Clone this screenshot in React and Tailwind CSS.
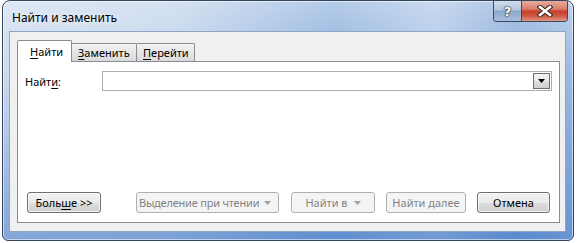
export default function App() {
  const btn =
    "h-[21px] rounded-[3px] border border-[#707070] bg-[linear-gradient(to_bottom,#f2f2f2_0%,#ebebeb_50%,#dddddd_51%,#cfcfcf_100%)] shadow-[inset_0_0_0_1px_rgba(255,255,255,0.7)] text-[11px] text-black flex items-center justify-center whitespace-nowrap";
  const dis =
    "h-[21px] rounded-[3px] border border-[#adb2b5] bg-[#f4f4f4] text-[11px] text-[#838383] flex items-center whitespace-nowrap";
  return (
    <div className="w-[579px] h-[243px] bg-white overflow-hidden font-['Noto_Sans',sans-serif] leading-none">
      <div className="ml-[2px] w-[572px] h-[241px] rounded-t-[8px] rounded-b-[6px] border border-[#34465e] flex flex-col bg-[linear-gradient(to_bottom,rgba(255,255,255,0.35),rgba(255,255,255,0)_30%,rgba(40,100,190,0.45)),linear-gradient(to_right,#cddbee_0%,#bfd2ea_30%,#8cafdc_58%,#adc6e7_76%,#84a8d9_90%,#9dbbe3_100%)] shadow-[inset_0_0_0_1px_rgba(255,255,255,0.55)]">
        {/* title bar */}
        <div className="h-[30px] flex items-start pl-[9px] pr-[5px]">
          <div className="pt-[11px] text-[12px] text-black [text-shadow:0_0_6px_rgba(255,255,255,0.9)] whitespace-nowrap">
            Найти и заменить
          </div>
          <div className="ml-auto flex h-[21px] rounded-b-[4px] border border-t-0 border-[#3a4a62] overflow-hidden">
            <div className="w-[28px] h-full flex items-center justify-center bg-[linear-gradient(to_bottom,#d3deed_0%,#b3c5de_45%,#8ea8cb_50%,#a9bfdc_100%)] border-r border-[#3a4a62]">
              <span className="text-[13px] font-bold text-white [text-shadow:0_0_1px_#1d2a3a,0_0_1px_#1d2a3a,0_0_2px_#1d2a3a] font-['DejaVu_Sans',sans-serif]">?</span>
            </div>
            <div className="w-[45px] h-full flex items-center justify-center bg-[linear-gradient(to_bottom,#e9aa9d_0%,#d8806e_40%,#c6412b_52%,#cf5a45_75%,#e39683_100%)]">
              <svg width="16" height="12" viewBox="0 0 16 12">
                <path d="M3 2 L13 10 M13 2 L3 10" stroke="#3a2420" strokeWidth="4.6" strokeLinecap="square" />
                <path d="M3 2 L13 10 M13 2 L3 10" stroke="#ffffff" strokeWidth="2.6" strokeLinecap="square" />
              </svg>
            </div>
          </div>
        </div>
        {/* client area */}
        <div className="ml-[6px] mr-[7px] mb-[8px] flex-1 bg-[#f0f0f0] border border-[#8ea5c4] flex flex-col pl-[7px] pr-[5px] pt-[8px] pb-[8px]">
          {/* tabs */}
          <div className="flex items-end h-[21px] text-[11px] text-black relative z-10 whitespace-nowrap">
            <div className="w-[55px] h-[22px] border border-b-0 border-[#898c95] bg-white rounded-t-[2px] flex items-center pl-[12px] pb-[1px] -mb-[1px]">
              <span><span className="underline underline-offset-2">Н</span>айти</span>
            </div>
            <div className="w-[65px] h-[18px] border border-b-0 border-l-0 border-[#898c95] bg-[linear-gradient(to_bottom,#f3f3f3,#e5e5e5_50%,#dadada)] rounded-tr-[2px] flex items-center pl-[6px]">
              <span><span className="underline underline-offset-2">З</span>аменить</span>
            </div>
            <div className="w-[58px] h-[18px] border border-b-0 border-l-0 border-[#898c95] bg-[linear-gradient(to_bottom,#f3f3f3,#e5e5e5_50%,#dadada)] rounded-tr-[2px] flex items-center pl-[6px]">
              <span><span className="underline underline-offset-2">П</span>ерейти</span>
            </div>
          </div>
          {/* panel */}
          <div className="flex-1 bg-white border border-[#898c95] flex flex-col pt-[9px] pb-[9px]">
            <div className="flex items-center h-[20px] pl-[7px] pr-[7px]">
              <div className="w-[77px] text-[11px] text-black whitespace-nowrap">
                Найт<span className="underline underline-offset-2">и</span>:
              </div>
              <div className="flex-1 h-[20px] border border-[#abadb3] flex justify-end items-center pr-[1px]">
                <div className="w-[17px] h-[16px] border border-[#707070] bg-[linear-gradient(to_bottom,#f2f2f2,#ebebeb_50%,#dddddd_51%,#cfcfcf)] flex items-center justify-center">
                  <svg width="7" height="4" viewBox="0 0 7 4"><path d="M0 0 H7 L3.5 4 Z" fill="#000" /></svg>
                </div>
              </div>
            </div>
            <div className="mt-auto flex items-center pl-[9px]">
              <div className={btn + " w-[74px]"}>
                <span>Боль<span className="underline underline-offset-2">ш</span>е &gt;&gt;</span>
              </div>
              <div className={dis + " w-[143px] ml-[35px] pl-[2px] pr-[7px] rounded-[2px]"}>
                <span className="tracking-[-0.2px]">Выделение при чтении</span>
                <svg className="ml-auto shrink-0" width="7" height="4" viewBox="0 0 7 4"><path d="M0 0 H7 L3.5 4 Z" fill="#a0a0a0" /></svg>
              </div>
              <div className={dis + " w-[84px] ml-[12px] justify-center gap-[6px]"}>
                <span>Найти в</span>
                <svg width="7" height="4" viewBox="0 0 7 4"><path d="M0 0 H7 L3.5 4 Z" fill="#a0a0a0" /></svg>
              </div>
              <div className={dis + " w-[80px] ml-[11px] justify-center"}>
                <span>Найти далее</span>
              </div>
              <div className={btn + " w-[73px] ml-[11px]"}>
                <span>Отмена</span>
              </div>
            </div>
          </div>
        </div>
      </div>
    </div>
  );
}
